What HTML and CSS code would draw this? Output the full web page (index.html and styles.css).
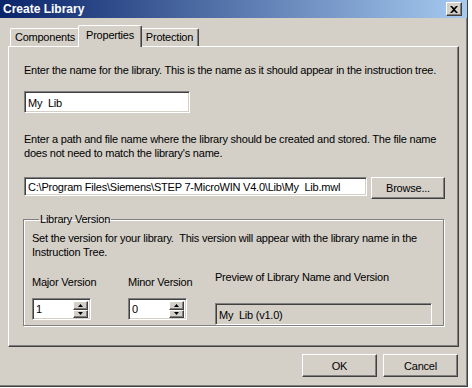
FILE: index.html
```html
<!DOCTYPE html>
<html lang="en">
<head>
    <meta charset="UTF-8">
    <title>Create Library</title>
    <link rel="stylesheet" href="styles.css">
</head>
<body>
    <div class="window">
        <div class="titlebar">
            <span class="title">Create Library</span>
            <button class="close-btn">
                <svg width="8" height="7" viewBox="0 0 8 7"><path d="M0 0h2l2 2 2-2h2L5 3.5 8 7H6L4 5 2 7H0l3-3.5z" fill="#000"/></svg>
            </button>
        </div>
        <div class="content">
            <div class="tabs">
                <div class="tab tab-components">Components</div>
                <div class="tab tab-active">Properties</div>
                <div class="tab tab-protection">Protection</div>
            </div>
            <div class="panel">
                <p class="text first">Enter the name for the library. This is the name as it should appear in the instruction tree.</p>
                <div class="field name-field">My&nbsp; Lib</div>
                <p class="text">Enter a path and file name where the library should be created and stored. The file name<br>does not need to match the library's name.</p>
                <div class="path-row">
                    <div class="field path-field">C:\Program Files\Siemens\STEP 7-MicroWIN V4.0\Lib\My&nbsp; Lib.mwl</div>
                    <button class="btn browse-btn">Browse...</button>
                </div>
                <fieldset class="group">
                    <legend>Library Version</legend>
                    <p class="text">Set the version for your library.&nbsp; This version will appear with the library name in the<br>Instruction Tree.</p>
                    <div class="version-row">
                        <div class="version-col major-col">
                            <label>Major Version</label>
                            <div class="spinner">
                                <span class="spin-value">1</span>
                                <div class="spin-btns">
                                    <span class="spin-btn"><svg width="5" height="3" viewBox="0 0 5 3"><path d="M2.5 0L5 3H0z" fill="#000"/></svg></span>
                                    <span class="spin-btn"><svg width="5" height="3" viewBox="0 0 5 3"><path d="M0 0h5L2.5 3z" fill="#000"/></svg></span>
                                </div>
                            </div>
                        </div>
                        <div class="version-col minor-col">
                            <label>Minor Version</label>
                            <div class="spinner">
                                <span class="spin-value">0</span>
                                <div class="spin-btns">
                                    <span class="spin-btn"><svg width="5" height="3" viewBox="0 0 5 3"><path d="M2.5 0L5 3H0z" fill="#000"/></svg></span>
                                    <span class="spin-btn"><svg width="5" height="3" viewBox="0 0 5 3"><path d="M0 0h5L2.5 3z" fill="#000"/></svg></span>
                                </div>
                            </div>
                        </div>
                        <div class="version-col preview-col">
                            <label>Preview of Library Name and Version</label>
                            <div class="field preview-field">My&nbsp; Lib (v1.0)</div>
                        </div>
                    </div>
                </fieldset>
            </div>
            <div class="actions">
                <button class="btn">OK</button>
                <button class="btn">Cancel</button>
            </div>
        </div>
    </div>
</body>
</html>
```

FILE: styles.css
```css
body {
    margin: 0;
    background-color: #fff;
    font-family: "Liberation Sans", Arial, sans-serif;
    font-size: 11px;
    letter-spacing: -0.22px;
    color: #000;
}

.window {
    width: 467px;
    height: 386px;
    background-color: #d4d0c8;
    border-right: 1px solid #404040;
    border-bottom: 1px solid #404040;
    box-shadow: inset -1px -1px #808080, inset -3px 0 #d4d0c8;
}

.titlebar {
    height: 18px;
    display: flex;
    align-items: center;
    justify-content: space-between;
    padding: 0 5px 0 3px;
    background: linear-gradient(to right, #0a246a, #a6caf0);
}

.title {
    color: #fff;
    font-weight: bold;
    font-size: 12px;
    letter-spacing: 0;
}

.close-btn {
    width: 16px;
    height: 14px;
    padding: 0;
    display: flex;
    align-items: center;
    justify-content: center;
    background-color: #d4d0c8;
    border: 1px solid;
    border-color: #fff #404040 #404040 #fff;
    box-shadow: inset -1px -1px #808080;
}

.content {
    padding: 6px 8px 0 8px;
}

.tabs {
    display: flex;
    align-items: flex-end;
    height: 22px;
    padding-left: 2px;
}

.tab {
    height: 18px;
    line-height: 17px;
    padding: 0;
    text-align: center;
    border: 1px solid #fff;
    border-bottom: none;
    border-right-color: #404040;
    box-shadow: inset -1px 0 #808080;
    border-radius: 2px 2px 0 0;
    box-sizing: border-box;
}

.tab-components {
    width: 70px;
}

.tab-active {
    width: 64px;
    height: 22px;
    line-height: 19px;
    margin: 0 -2px -1px -2px;
    background-color: #d4d0c8;
    position: relative;
    z-index: 1;
}

.tab-protection {
    width: 59px;
}

.panel {
    height: 301px;
    box-sizing: border-box;
    padding: 0 0 0 15px;
    border: 1px solid;
    border-color: #fff #404040 #404040 #fff;
    box-shadow: inset -1px -1px #808080;
}

.text {
    margin: 0;
    line-height: 14px;
}

.first {
    margin-top: 16px;
}

.field {
    background-color: #fff;
    height: 22px;
    line-height: 22px;
    padding: 0 3px;
    box-sizing: border-box;
    border: 1px solid;
    border-color: #808080 #fff #fff #808080;
    box-shadow: inset 1px 1px #404040, inset -1px -1px #d4d0c8;
    white-space: nowrap;
}

.name-field {
    width: 166px;
    margin: 14px 0 19px 0;
}

.path-row {
    display: flex;
    align-items: flex-start;
    gap: 4px;
    margin-top: 17px;
}

.path-field {
    width: 343px;
    height: 19px;
    line-height: 18px;
}

.btn {
    font-family: inherit;
    font-size: 11px;
    letter-spacing: inherit;
    width: 75px;
    height: 23px;
    padding: 0;
    background-color: #d4d0c8;
    border: 1px solid;
    border-color: #fff #404040 #404040 #fff;
    box-shadow: inset -1px -1px #808080;
}

.browse-btn {
    width: 74px;
    height: 22px;
}

.group {
    width: 421px;
    height: 113px;
    margin: 14px 0 0 -1px;
    padding: 0 0 0 8px;
    box-sizing: border-box;
    border: 1px solid #808080;
    box-shadow: 1px 1px #fff, inset 1px 1px #fff;
}

.group legend {
    padding: 0 1px;
    margin-left: 7px;
}

.group .text {
    margin-top: 6px;
}

.version-row {
    display: flex;
    margin-top: 12px;
}

.version-col {
    display: flex;
    flex-direction: column;
}

.major-col {
    width: 96px;
}

.minor-col {
    width: 87px;
}

.major-col label,
.minor-col label {
    margin-top: 5px;
    margin-bottom: 10px;
}

.preview-col label {
    margin-bottom: 20px;
}

.spinner {
    width: 59px;
    height: 22px;
    display: flex;
    justify-content: space-between;
    background-color: #fff;
    box-sizing: border-box;
    border: 1px solid;
    border-color: #808080 #fff #fff #808080;
    box-shadow: inset 1px 1px #404040, inset -1px -1px #d4d0c8;
    padding: 2px 2px 1px 3px;
}

.spin-value {
    line-height: 17px;
}

.spin-btns {
    display: flex;
    flex-direction: column;
}

.spin-btn {
    width: 15px;
    height: 9px;
    display: flex;
    align-items: center;
    justify-content: center;
    background-color: #d4d0c8;
    box-sizing: border-box;
    border: 1px solid;
    border-color: #fff #404040 #404040 #fff;
    box-shadow: inset -1px -1px #808080;
}

.preview-field {
    width: 217px;
    background-color: #d4d0c8;
}

.actions {
    display: flex;
    justify-content: flex-end;
    gap: 6px;
    margin-top: 7px;
    padding-right: 1px;
}
```
